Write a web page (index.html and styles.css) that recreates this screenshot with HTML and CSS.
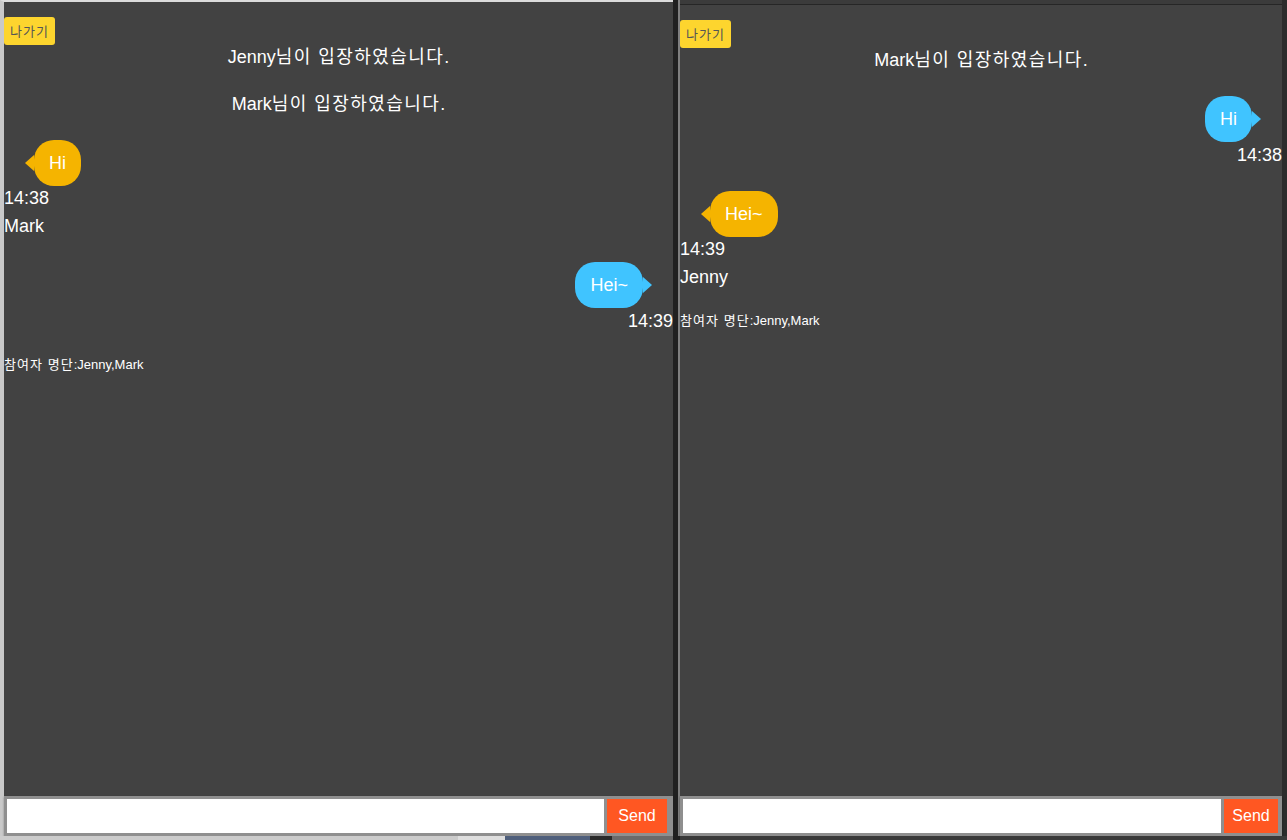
FILE: index.html
```html
<!DOCTYPE html>
<html lang="ko">
<head>
<meta charset="utf-8">
<title>Chat</title>
<link rel="stylesheet" href="styles.css">
</head>
<body>
  <div class="win win-left">
    <div class="chat">
      <button class="exit">나가기</button>
      <p class="sys">Jenny<span class="ko">님이 입장하였습니다</span>.</p>
      <p class="sys">Mark<span class="ko">님이 입장하였습니다</span>.</p>
      <div class="msg recv">
        <div class="bubble">Hi</div>
        <div class="time">14:38</div>
        <div class="name">Mark</div>
      </div>
      <div class="msg sent">
        <div class="bubble">Hei~</div>
        <div class="time">14:39</div>
      </div>
      <div class="members"><span class="ko">참여자 명단</span>:Jenny,Mark</div>
    </div>
    <div class="inputbar">
      <input class="field" type="text">
      <button class="send">Send</button>
    </div>
  </div>
  <div class="divider"></div>
  <div class="win win-right">
    <div class="titlebar"></div>
    <div class="chat">
      <button class="exit">나가기</button>
      <p class="sys">Mark<span class="ko">님이 입장하였습니다</span>.</p>
      <div class="msg sent">
        <div class="bubble">Hi</div>
        <div class="time">14:38</div>
      </div>
      <div class="msg recv">
        <div class="bubble">Hei~</div>
        <div class="time">14:39</div>
        <div class="name">Jenny</div>
      </div>
      <div class="members"><span class="ko">참여자 명단</span>:Jenny,Mark</div>
    </div>
    <div class="inputbar inputbar-right">
      <input class="field" type="text">
      <button class="send send-narrow">Send</button>
    </div>
  </div>
  <div class="taskbar"></div>
</body>
</html>
```
FILE: styles.css
```css
* { box-sizing: border-box; }

html, body {
  margin: 0;
  padding: 0;
}

body {
  width: 1287px;
  height: 840px;
  overflow: hidden;
  background: #1f1f1f;
  display: grid;
  grid-template-columns: 673px 5px 609px;
  grid-template-rows: 836px 4px;
  font-family: "Liberation Sans", "Noto Sans CJK KR", sans-serif;
  color: #ffffff;
}

.win {
  display: flex;
  flex-direction: column;
  min-height: 0;
}

.win-left {
  border-left: 4px solid #c9c9c9;
  border-top: 2px solid #dcdcdc;
}

.win-right {
  border-left: 2px solid #7f7f7f;
  border-right: 5px solid #2c2c2c;
}

.titlebar {
  height: 5px;
  background: #3b3b3b;
  border-bottom: 1px solid #262626;
  flex: none;
}

.divider {
  background: #202020;
}

.chat {
  flex: 1;
  background: #424242;
  min-height: 0;
  overflow: hidden;
}

.ko {
  letter-spacing: 0.08em;
}

.exit {
  display: block;
  margin: 15px 0 0 0;
  height: 28px;
  padding: 0 6px;
  border: none;
  border-radius: 3px;
  background: #fdd52e;
  color: #555555;
  font-family: "Noto Sans CJK KR", "Liberation Sans", sans-serif;
  font-size: 13px;
  line-height: 28px;
  letter-spacing: 1px;
}

.sys {
  margin: 26px 0 0 0;
  text-align: center;
  font-size: 18px;
  line-height: 21px;
}

.exit + .sys {
  margin-top: 2px;
}

.msg {
  margin-top: 25px;
  font-size: 18px;
  line-height: 21px;
}

.bubble {
  display: inline-block;
  position: relative;
  padding: 13px 15px;
  line-height: 20px;
  font-size: 18px;
  color: #ffffff;
  border-radius: 20px;
}

.bubble::before {
  content: "";
  position: absolute;
  top: 50%;
  margin-top: -8px;
  width: 0;
  height: 0;
  border-top: 8px solid transparent;
  border-bottom: 8px solid transparent;
}

.recv .bubble {
  margin-left: 30px;
  background: #f5b400;
}

.recv .bubble::before {
  left: -9px;
  border-right: 9px solid #f5b400;
}

.sent {
  text-align: right;
}

.sent .bubble {
  margin-right: 30px;
  background: #40c4ff;
}

.sent .bubble::before {
  right: -9px;
  border-left: 9px solid #40c4ff;
}

.time {
  margin-top: 2px;
}

.sent .time {
  margin-top: 3px;
}

.name {
  margin-top: 7px;
}

.members {
  margin-top: 25px;
  font-size: 13px;
  line-height: 15px;
}

.inputbar {
  flex: none;
  height: 40px;
  background: #8f8f8f;
  display: flex;
  gap: 3px;
  padding: 3px 6px 3px 3px;
  box-shadow: 0 1px 2px rgba(0, 0, 0, 0.35);
}

.inputbar-right {
  padding-right: 4px;
}

.field {
  flex: 1;
  min-width: 0;
  height: 34px;
  border: none;
  background: #ffffff;
  margin: 0;
  padding: 0 4px;
}

.send {
  width: 60px;
  height: 34px;
  border: none;
  margin: 0;
  padding: 0;
  background: #ff5722;
  color: #ffffff;
  font-family: "Liberation Sans", sans-serif;
  font-size: 16px;
}

.send-narrow {
  width: 54px;
}

.taskbar {
  grid-column: 1 / -1;
  background: linear-gradient(to right,
    #cbcbcb 0, #cbcbcb 458px,
    #dedede 458px, #dedede 505px,
    #4f5f7c 505px, #4f5f7c 590px,
    #2a2a2a 590px, #2a2a2a 612px,
    #6a6a6a 612px, #6a6a6a 673px,
    #1f1f1f 673px, #1f1f1f 680px,
    #3a3a3a 680px);
}
```
